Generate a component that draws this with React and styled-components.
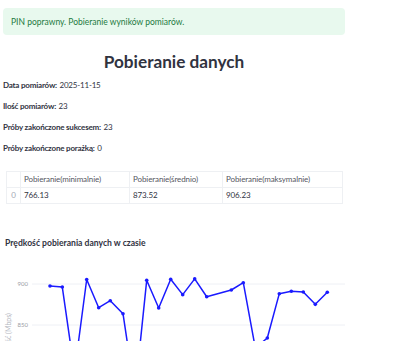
import React from "react";
import styled, { createGlobalStyle } from "styled-components";

const GlobalStyle = createGlobalStyle`
html, body {
  margin: 0;
  background: #ffffff;
  overflow: hidden;
}
body {
  font-family: "Lato", "Noto Sans", sans-serif;
  color: #31333f;
}
`;

const Main = styled.div`
width: 342px;
padding: 8px 0 0 3px;
`;

const Alert = styled.div`
height: 27px;
display: flex;
align-items: center;
padding: 0 8px;
background: #e8f9ee;
border-radius: 4px;
color: #1d7a3f;
font-size: 8.5px;
`;

const Title = styled.h1`
margin: 15px 0 0;
text-align: center;
font-size: 17.2px;
font-weight: 700;
line-height: 24px;
color: #31333f;
`;

const Stat = styled.p`
margin: 0;
height: 21px;
display: flex;
align-items: center;
gap: 2.5px;
font-size: 8px;
letter-spacing: -0.2px;
color: #31333f;
b {
  font-weight: 700;
}
`;

const Table = styled.table`
margin: 12.5px 0 0 3px;
width: 336px;
border-collapse: collapse;
font-size: 8px;
letter-spacing: -0.1px;
table-layout: fixed;
`;

const Cell = styled.td`
height: 15px;
padding: 0 3px;
border: 1px solid #eef0f3;
font-weight: 400;
color: ${(p) => (p.$index ? "#a3a8b4" : p.$head ? "#55575f" : "#31333f")};
text-align: ${(p) => (p.$index ? "center" : "left")};
white-space: nowrap;
`;

const ChartTitle = styled.h3`
margin: 33px 0 0 2px;
font-size: 8.6px;
font-weight: 700;
line-height: 12px;
color: #31333f;
`;

const ChartSvg = styled.svg`
display: block;
margin-top: 8px;
overflow: hidden;
`;

const values = [
  897.6, 896.3, 792.7, 905.5, 871.1, 879.6, 863.8, 766.13, 904.5, 870.7,
  905.8, 887.0, 906.23, 884.5, 892.7, 901.6, 822, 834.1, 888.2, 891.1,
  890.2, 875.2, 889.9,
];
const xs = [
  50, 62.3, 74.5, 86.7, 98.7, 110.3, 123, 135, 146.7, 158.7, 170.7, 182.7,
  194.7, 206.7, 231.3, 243.3, 255.3, 267.3, 279.3, 291.3, 303.3, 315.3, 327.3,
];

// chart svg starts at page y=255
const top = 255;
const yOf = (v) => 282 + (900 - v) * 0.82 - top;

function SpeedChart() {
  const pts = values.map((v, i) => [xs[i] - 3, yOf(v)]);
  const d = pts.map((p, i) => (i ? "L" : "M") + p[0] + " " + p[1]).join(" ");
  return (
    <ChartSvg width="342" height="86" viewBox="0 0 342 86">
      {[900, 850].map((t) => (
        <g key={t}>
          <line x1="29" x2="342" y1={yOf(t)} y2={yOf(t)} stroke="#eef0f5" strokeWidth="1" />
          <text x="25" y={yOf(t) + 2} fontSize="6" fill="#9a9da6" textAnchor="end" fontFamily="Lato, sans-serif">
            {t}
          </text>
        </g>
      ))}
      <text
        transform={`translate(7.5 ${311 - top}) rotate(-90)`}
        fontSize="7"
        fill="#b4b7bf"
        textAnchor="end"
        fontFamily="Lato, sans-serif"
      >
        Prędkość (Mbps)
      </text>
      <path d={d} fill="none" stroke="#1a1aff" strokeWidth="1.5" strokeLinejoin="round" />
      {pts.map((p, i) => (
        <circle key={i} cx={p[0]} cy={p[1]} r="1.8" fill="#1a1aff" />
      ))}
    </ChartSvg>
  );
}

export default function App() {
  return (
    <Main>
      <GlobalStyle />
      <Alert>PIN poprawny. Pobieranie wyników pomiarów.</Alert>
      <Title>Pobieranie danych</Title>
      <Stat><b>Data pomiarów:</b> 2025-11-15</Stat>
      <Stat><b>Ilość pomiarów:</b> 23</Stat>
      <Stat><b>Próby zakończone sukcesem:</b> 23</Stat>
      <Stat><b>Próby zakończone porażką:</b> 0</Stat>
      <Table>
        <colgroup>
          <col style={{ width: 14 }} />
          <col style={{ width: 109 }} />
          <col style={{ width: 93 }} />
          <col style={{ width: 120 }} />
        </colgroup>
        <thead>
          <tr>
            <Cell as="th" $index></Cell>
            <Cell as="th" $head>Pobieranie(minimalnie)</Cell>
            <Cell as="th" $head>Pobieranie(średnio)</Cell>
            <Cell as="th" $head>Pobieranie(maksymalnie)</Cell>
          </tr>
        </thead>
        <tbody>
          <tr>
            <Cell $index>0</Cell>
            <Cell>766.13</Cell>
            <Cell>873.52</Cell>
            <Cell>906.23</Cell>
          </tr>
        </tbody>
      </Table>
      <ChartTitle>Prędkość pobierania danych w czasie</ChartTitle>
      <SpeedChart />
    </Main>
  );
}
